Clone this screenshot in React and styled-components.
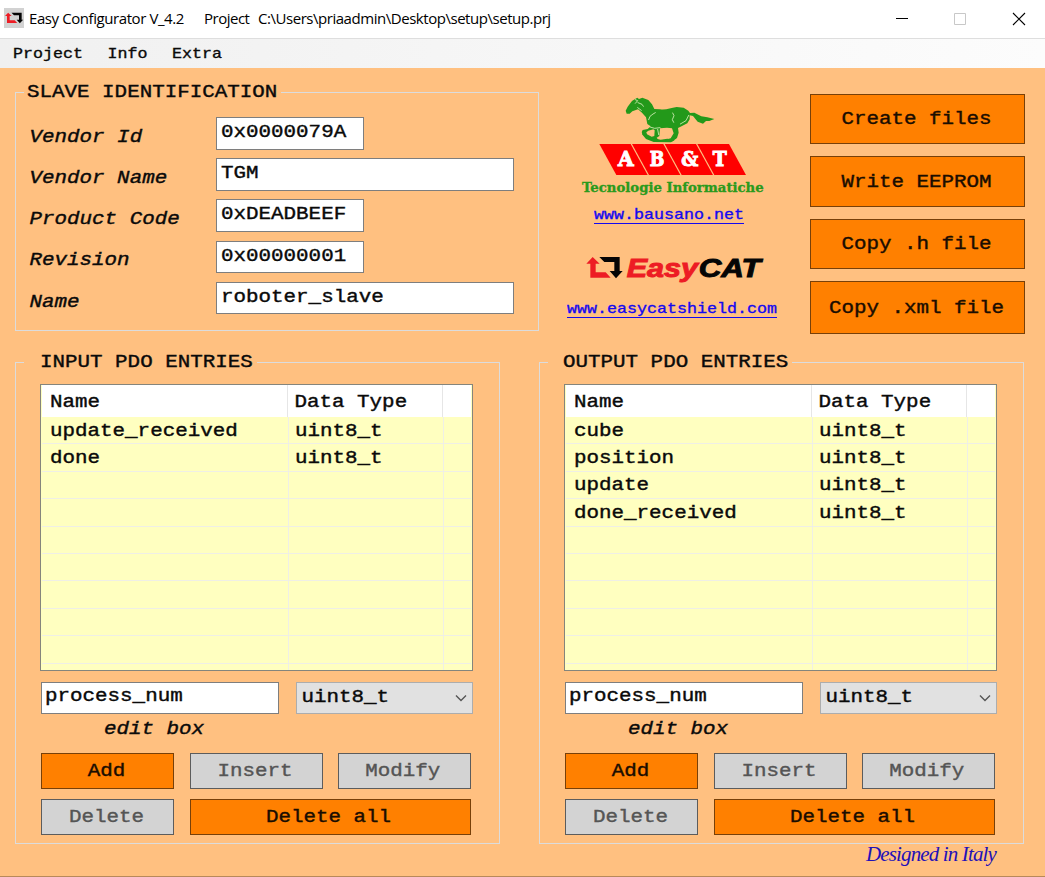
import React from "react";
import styled, { createGlobalStyle } from "styled-components";

const Global = createGlobalStyle`
  * { box-sizing: border-box; }
  html, body { margin: 0; padding: 0; background: #ffc080; }
  body { overflow: hidden; }
`;

const Window = styled.div`
  width: 1045px;
  height: 877px;
  display: flex;
  flex-direction: column;
  background: #ffc080;
  border-bottom: 1px solid #b8895a;
  color: #0a0a0a;
`;

const TitleBar = styled.header`
  height: 39px;
  flex: none;
  display: flex;
  align-items: center;
  padding: 0 19px 1px 4px;
  background: #fff;
  border-bottom: 1px solid #dedede;
`;

const AppIcon = styled.svg`
  width: 20px;
  height: 20px;
  flex: none;
  margin: 0 5px 2px 0;
  background: #d2d2d2;
`;

const TitleText = styled.span`
  flex: none;
  width: ${(p) => p.$width}px;
  margin-bottom: 2px;
  font: 15px/20px "Open Sans", "Noto Sans", sans-serif;
  letter-spacing: ${(p) => p.$spacing}px;
  white-space: pre;
  color: #000;
`;

const WindowControls = styled.div`
  margin-left: auto;
  display: flex;
  gap: 45px;
  svg { width: 14px; height: 14px; display: block; }
`;

const MenuBar = styled.nav`
  height: 29px;
  flex: none;
  display: flex;
  gap: 24.5px;
  padding: 5px 0 0 13px;
  background: linear-gradient(90deg, #f0f0f0, #fcfcfc);
`;

const Mono = styled.span`
  display: inline-block;
  font-family: "Liberation Mono", monospace;
  font-size: ${(p) => (p.$small ? 16.67 : 20.87)}px;
  line-height: ${(p) => (p.$small ? 20 : 24)}px;
  font-style: ${(p) => (p.$italic ? "italic" : "normal")};
  white-space: pre;
  -webkit-text-stroke: ${(p) => (p.$small ? 0.4 : 0.45)}px currentColor;
  transform: scaleY(0.85);
  transform-origin: 0 ${(p) => (p.$small ? 14.4 : 17.6)}px;
`;

const TopRow = styled.section`
  display: flex;
  align-items: flex-start;
  padding: 24px 0 0 15px;
`;

const Group = styled.div`
  width: ${(p) => p.$width}px;
  height: ${(p) => p.$height}px;
  flex: none;
  display: flex;
  flex-direction: column;
  align-items: flex-start;
  border: 1px solid #dcdcdc;
`;

const Legend = styled.div`
  height: 24px;
  flex: none;
  margin: -13px 0 0 8px;
  padding: 0 4px 0 ${(p) => p.$indent}px;
  background: #ffc080;
`;

const FieldList = styled.div`
  padding-top: 13px;
`;

const FieldRow = styled.label`
  display: flex;
  height: 41.2px;
  padding-left: 13.5px;
`;

const FieldLabel = styled.span`
  width: 186.5px;
  padding-top: 7.8px;
`;

const TextBox = styled.div`
  width: ${(p) => p.$width}px;
  height: 32.6px;
  padding: ${(p) => p.$top}px 0 0 ${(p) => p.$left}px;
  background: #fff;
  border: 1px solid #7e7e7e;
`;

const Brand = styled.div`
  width: 240px;
  margin: -7px 10px 0 21px;
  display: flex;
  flex-direction: column;
  align-items: flex-start;
  svg { display: block; }
`;

const Link = styled.a`
  height: 19px;
  margin: ${(p) => p.$margin};
  color: #1408f0;
  border-bottom: 1.5px solid #1408f0;
`;

const ActionColumn = styled.div`
  display: grid;
  grid-template-columns: 215px;
  grid-template-rows: 50px 51px 50px 53px;
  row-gap: 12px;
  padding-top: 2px;
`;

const Button = styled.button`
  display: flex;
  align-items: center;
  justify-content: center;
  padding: 0 ${(p) => p.$shift || 0}px 0 0;
  background: ${(p) => (p.disabled ? "#d3d3d3" : "#ff8000")};
  border: 1px solid ${(p) => (p.disabled ? "#5c5c5c" : "#774009")};
  color: ${(p) => (p.disabled ? "#555" : "#1a0d00")};
  grid-column: span ${(p) => p.$span || 1};
`;

const PdoRow = styled.section`
  display: flex;
  gap: 39px;
  margin: 28px 0 0 15px;
`;

const Table = styled.div`
  width: 433px;
  height: 287px;
  flex: none;
  margin: 10px 0 10.5px 24px;
  overflow: hidden;
  background: #ffffc0;
  border: 1px solid #85857c;
`;

const HeadRow = styled.div`
  display: grid;
  grid-template-columns: 246px 155px 1fr;
  height: 31.8px;
  margin: 0 1px;
  background: #fff;
`;

const HeadCell = styled.div`
  padding: 4.5px 0 0 ${(p) => p.$pad}px;
  border-right: ${(p) => (p.$last ? "none" : "1px solid #e6e6e6")};
`;

const BodyRow = styled.div`
  display: grid;
  grid-template-columns: 247px 155px 1fr;
  height: 27.45px;
  margin: 0 1px;
`;

const BodyCell = styled.div`
  padding: 1.8px 0 0 ${(p) => p.$pad}px;
  border-right: ${(p) => (p.$last ? "none" : "1px solid #efefe6")};
  border-bottom: 1px solid #efefe6;
`;

const EditRow = styled.div`
  display: flex;
  gap: 17px;
  padding-left: 25px;
`;

const Select = styled.div`
  width: 177px;
  height: 32.6px;
  display: flex;
  justify-content: space-between;
  align-items: flex-start;
  padding: 2.6px 5px 0 4.5px;
  background: #e1e1e1;
  border: 1px solid #adadad;
  svg { margin-top: 9.4px; }
`;

const EditCaption = styled.div`
  height: 24px;
  margin: 2.5px 0 12px 88px;
`;

const ButtonGrid = styled.div`
  display: grid;
  grid-template-columns: 133px 133px 132.5px;
  grid-template-rows: 36px 36px;
  gap: 10px 15.5px;
  padding-left: 25px;
`;

const Footer = styled.footer`
  display: flex;
  justify-content: flex-end;
  padding-right: 49px;
`;

const Signature = styled.span`
  font: italic 21px/26px "Liberation Serif", serif;
  height: 26px;
  margin-top: -3px;
  letter-spacing: -0.86px;
  white-space: nowrap;
  color: #2210b8;
`;

const Arrows = () => (
  <>
    <path fill="#ed1c24" d="M98 186L119 206H107V232H137L152 248H91V206H79Z" />
    <path fill="#050505" d="M118 186H179V228H188L168 250L149 228H163V201H133Z" />
  </>
);

const BausanoLogo = () => (
  <svg width="240" height="112" viewBox="0 0 720 336">
    <g fill="#23991a">
      <path d="M197 77L203 65L216 48L224 43L232 38L237 42L247 38L265 45L276 58L283 72L300 73C319 76 331 68 350 66L371 68L385 77L390 84L403 83L424 94L442 97L463 102L448 108L438 108L429 116L413 110L399 93L389 91L389 103L382 115L366 123L354 129L356 143L351 159L338 169L319 171L314 165L332 160L341 145L336 130L321 128L300 130L298 153L290 158L296 166L286 171L271 163L253 153L245 142L248 135L263 132L272 124L262 117L258 97L246 83L234 73L217 79L209 86L200 86Z" />
      <path d="M248 137L266 157L302 164L322 161L344 165L333 172L281 171L258 162L246 148Z" />
    </g>
    <path d="M265 137L280 133L284 136L283 153L275 155L261 148L259 142Z" fill="#ffc080" />
    <path d="M304 136L316 131L330 133L335 144L329 156L308 159L300 155Z" fill="#ffc080" />
    <g fill="none" stroke="#d8efba" strokeWidth="2.5" strokeLinecap="round">
      <path d="M226 44L233 47L226 55M234 53L246 58L250 64M233 68L244 76M266 104L270 94L279 87L286 83M338 84L342 92L337 104L341 112M386 91L378 107L361 117M270 126L284 130L300 128M293 133L296 149" />
    </g>
    <g fill="#f00">
      <path d="M118 177H212L263 270H169Z" />
      <path d="M216 177H310L361 270H267Z" />
      <path d="M314 177H408L459 270H365Z" />
      <path d="M412 177H507L558 270H463Z" />
    </g>
    <g fill="#fff" stroke="#fff" strokeWidth="3" fontFamily="DejaVu Serif, serif" fontWeight="700" fontSize="59">
      <text x="174" y="244" textLength="47" lengthAdjust="spacingAndGlyphs">A</text>
      <text x="269" y="244" textLength="44" lengthAdjust="spacingAndGlyphs">B</text>
      <text x="364" y="244" textLength="51" lengthAdjust="spacingAndGlyphs">&amp;</text>
      <text x="458" y="244" textLength="42" lengthAdjust="spacingAndGlyphs">T</text>
    </g>
    <text x="66" y="322" textLength="545" lengthAdjust="spacingAndGlyphs" fill="#2a9a1c" stroke="#2a9a1c" strokeWidth="1" fontFamily="DejaVu Serif, serif" fontWeight="700" fontSize="40">
      Tecnologie Informatiche
    </text>
  </svg>
);

const EasyCatLogo = () => (
  <svg width="240" height="36" viewBox="0 165 720 108">
    <Arrows />
    <g fontFamily="Liberation Sans, Arial, sans-serif" fontWeight="700" fontStyle="italic" fontSize="80" strokeWidth="3">
      <text x="200" y="247" textLength="214" lengthAdjust="spacingAndGlyphs" fill="#ed1c24" stroke="#ed1c24">Easy</text>
      <text x="416" y="247" textLength="186" lengthAdjust="spacingAndGlyphs" fill="#050505" stroke="#050505">CAT</text>
    </g>
  </svg>
);

const FIELDS = [
  ["Vendor Id", "0x0000079A", 148],
  ["Vendor Name", "TGM", 298],
  ["Product Code", "0xDEADBEEF", 148],
  ["Revision", "0x00000001", 148],
  ["Name", "roboter_slave", 298],
];

function PdoPanel({ title, indent, entries }) {
  const rows = Array.from({ length: 10 }, (_, i) => entries[i] || "");
  return (
    <Group $width={485} $height={482}>
      <Legend $indent={indent}><Mono>{title}</Mono></Legend>
      <Table>
        <HeadRow>
          <HeadCell $pad={8}><Mono>Name</Mono></HeadCell>
          <HeadCell $pad={6.5}><Mono>Data Type</Mono></HeadCell>
          <HeadCell $last />
        </HeadRow>
        {rows.map((name, i) => (
          <BodyRow key={i}>
            <BodyCell $pad={8}><Mono>{name}</Mono></BodyCell>
            <BodyCell $pad={6}><Mono>{name && "uint8_t"}</Mono></BodyCell>
            <BodyCell $last />
          </BodyRow>
        ))}
      </Table>
      <EditRow>
        <TextBox $width={238} $top={1.6} $left={3}><Mono>process_num</Mono></TextBox>
        <Select>
          <Mono>uint8_t</Mono>
          <svg width="12" height="9" viewBox="0 0 12 9">
            <path d="M1 1.5L6 6.5L11 1.5" fill="none" stroke="#555" strokeWidth="1.4" />
          </svg>
        </Select>
      </EditRow>
      <EditCaption><Mono $italic>edit box</Mono></EditCaption>
      <ButtonGrid>
        <Button $shift={2}><Mono>Add</Mono></Button>
        <Button $shift={2} disabled><Mono>Insert</Mono></Button>
        <Button $shift={3} disabled><Mono>Modify</Mono></Button>
        <Button $shift={2} disabled><Mono>Delete</Mono></Button>
        <Button $shift={3} $span={2}><Mono>Delete all</Mono></Button>
      </ButtonGrid>
    </Group>
  );
}

export default function App() {
  return (
    <Window>
      <Global />
      <TitleBar>
        <AppIcon viewBox="73 158 120 120"><Arrows /></AppIcon>
        <TitleText $width={175} $spacing={-0.42}>Easy Configurator V_4.2</TitleText>
        <TitleText $width={54} $spacing={-0.5}>Project</TitleText>
        <TitleText $width={300} $spacing={-0.46}>C:\Users\priaadmin\Desktop\setup\setup.prj</TitleText>
        <WindowControls>
          <svg viewBox="0 0 14 14"><path d="M2 6.5H14" stroke="#000" /></svg>
          <svg viewBox="0 0 14 14"><path d="M1.5 1.5H12.5V12.5H1.5Z" fill="none" stroke="#c8c8c8" /></svg>
          <svg viewBox="0 0 14 14"><path d="M1 1L13 13M13 1L1 13" stroke="#000" strokeWidth="1.1" /></svg>
        </WindowControls>
      </TitleBar>
      <MenuBar>
        {["Project", "Info", "Extra"].map((m) => <Mono $small key={m}>{m}</Mono>)}
      </MenuBar>
      <TopRow>
        <Group $width={524} $height={239}>
          <Legend $indent={3}><Mono>SLAVE IDENTIFICATION</Mono></Legend>
          <FieldList>
            {FIELDS.map(([label, value, width]) => (
              <FieldRow key={label}>
                <FieldLabel><Mono $italic>{label}</Mono></FieldLabel>
                <TextBox $width={width} $top={2} $left={4}><Mono>{value}</Mono></TextBox>
              </FieldRow>
            ))}
          </FieldList>
        </Group>
        <Brand>
          <BausanoLogo />
          <Link $margin="8px 0 26px 34px"><Mono $small>www.bausano.net</Mono></Link>
          <EasyCatLogo />
          <Link $margin="13px 0 0 7px"><Mono $small>www.easycatshield.com</Mono></Link>
        </Brand>
        <ActionColumn>
          {["Create files", "Write EEPROM", "Copy .h file", "Copy .xml file"].map((t) => (
            <Button key={t} $shift={2}><Mono>{t}</Mono></Button>
          ))}
        </ActionColumn>
      </TopRow>
      <PdoRow>
        <PdoPanel title="INPUT PDO ENTRIES" indent={16} entries={["update_received", "done"]} />
        <PdoPanel title="OUTPUT PDO ENTRIES" indent={15} entries={["cube", "position", "update", "done_received"]} />
      </PdoRow>
      <Footer>
        <Signature>Designed in Italy</Signature>
      </Footer>
    </Window>
  );
}
